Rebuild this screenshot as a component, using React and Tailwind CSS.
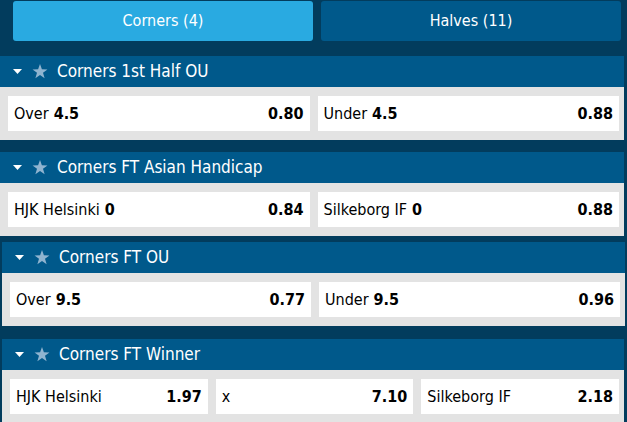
import React from 'react';

const font = { fontFamily: '"DejaVu Sans Condensed", "DejaVu Sans", Tahoma, sans-serif' };

const markets = [
  {
    title: 'Corners 1st Half OU',
    shift: 'ml-0 mr-[3px]',
    gapAfter: 'mb-3',
    odds: [
      { label: 'Over', line: '4.5', price: '0.80' },
      { label: 'Under', line: '4.5', price: '0.88' },
    ],
  },
  {
    title: 'Corners FT Asian Handicap',
    shift: 'ml-0 mr-[3px]',
    gapAfter: 'mb-[6px]',
    odds: [
      { label: 'HJK Helsinki', line: '0', price: '0.84' },
      { label: 'Silkeborg IF', line: '0', price: '0.88' },
    ],
  },
  {
    title: 'Corners FT OU',
    shift: 'ml-[2px] mr-[2px]',
    gapAfter: 'mb-[13px]',
    odds: [
      { label: 'Over', line: '9.5', price: '0.77' },
      { label: 'Under', line: '9.5', price: '0.96' },
    ],
  },
  {
    title: 'Corners FT Winner',
    shift: 'ml-[2px] mr-[3px]',
    gapAfter: '',
    odds: [
      { label: 'HJK Helsinki', price: '1.97' },
      { label: 'x', price: '7.10' },
      { label: 'Silkeborg IF', price: '2.18' },
    ],
  },
];

const Caret = () => (
  <svg width="9" height="5" viewBox="0 0 9 5" className="mr-[10px]">
    <path d="M0 0 H9 L4.5 5 Z" fill="#ffffff" />
  </svg>
);

const Star = () => (
  <svg width="16" height="15" viewBox="0 0 24 23" className="mr-[9px]">
    <path
      d="M12 0 L14.9 8.1 L23.4 8.3 L16.6 13.5 L19.1 21.7 L12 16.8 L4.9 21.7 L7.4 13.5 L0.6 8.3 L9.1 8.1 Z"
      fill="#8fb4d0"
    />
  </svg>
);

const OddButton = ({ label, line, price }) => (
  <div className="flex-1 h-[35px] bg-white flex items-center justify-between pl-[6px] pr-[6px] text-[16px] text-black">
    <span>
      {label}
      {line && <b className="ml-[5px] font-bold">{line}</b>}
    </span>
    <b className="font-bold">{price}</b>
  </div>
);

const Market = ({ market }) => (
  <div className={`${market.shift} ${market.gapAfter}`}>
    <div className="h-[31px] bg-[#00598b] flex items-center pl-[13px] text-white text-[17px]">
      <Caret />
      <Star />
      <span>{market.title}</span>
    </div>
    <div className="bg-[#e3e3e3] pt-[9px] pb-[9px] pl-2 pr-[5px] flex gap-2">
      {market.odds.map((o, i) => (
        <OddButton key={i} {...o} />
      ))}
    </div>
  </div>
);

export default function App() {
  return (
    <div className="w-[627px] h-[422px] overflow-hidden bg-[#023c5d]" style={font}>
      <div className="flex gap-2 pt-[1px] pl-[13px] pr-[6px] mb-[15px]">
        <button className="w-[300px] h-[40px] rounded-[3px] bg-[#29aae1] text-white text-[16px]">
          Corners (4)
        </button>
        <button className="w-[300px] h-[40px] rounded-[3px] bg-[#00598b] text-white text-[16px]">
          Halves (11)
        </button>
      </div>
      {markets.map((m) => (
        <Market key={m.title} market={m} />
      ))}
    </div>
  );
}
